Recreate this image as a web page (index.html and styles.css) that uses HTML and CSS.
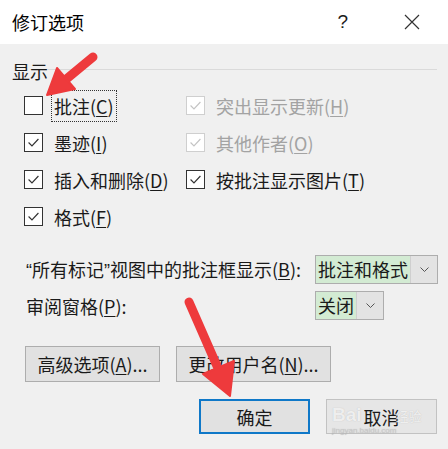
FILE: index.html
```html
<!DOCTYPE html>
<html lang="zh-CN">
<head>
    <meta charset="UTF-8">
    <title>修订选项</title>
    <link rel="stylesheet" href="styles.css">
</head>
<body>
    <div class="dialog">
        <header class="titlebar">
            <span class="title">修订选项</span>
            <span class="help">?</span>
            <svg class="close" width="16" height="16" viewBox="0 0 16 16">
                <path d="M1 1 L15 15 M15 1 L1 15" stroke="#333" stroke-width="1.2" fill="none" />
            </svg>
        </header>

        <main class="group">
            <div class="legend">
                <span>显示</span>
                <div class="rule"></div>
            </div>

            <ul class="checks">
                <li class="check">
                    <span class="box"></span>
                    <span class="label focus">批注(<u>C</u>)</span>
                </li>
                <li class="check disabled">
                    <span class="box"><svg viewBox="0 0 19 19"><path d="M4 9.5 L7.8 13.3 L15 5.6" /></svg></span>
                    <span class="label">突出显示更新(<u>H</u>)</span>
                </li>
                <li class="check">
                    <span class="box"><svg viewBox="0 0 19 19"><path d="M4 9.5 L7.8 13.3 L15 5.6" /></svg></span>
                    <span class="label">墨迹(<u>I</u>)</span>
                </li>
                <li class="check disabled">
                    <span class="box"><svg viewBox="0 0 19 19"><path d="M4 9.5 L7.8 13.3 L15 5.6" /></svg></span>
                    <span class="label">其他作者(<u>O</u>)</span>
                </li>
                <li class="check">
                    <span class="box"><svg viewBox="0 0 19 19"><path d="M4 9.5 L7.8 13.3 L15 5.6" /></svg></span>
                    <span class="label">插入和删除(<u>D</u>)</span>
                </li>
                <li class="check">
                    <span class="box"><svg viewBox="0 0 19 19"><path d="M4 9.5 L7.8 13.3 L15 5.6" /></svg></span>
                    <span class="label">按批注显示图片(<u>T</u>)</span>
                </li>
                <li class="check">
                    <span class="box"><svg viewBox="0 0 19 19"><path d="M4 9.5 L7.8 13.3 L15 5.6" /></svg></span>
                    <span class="label">格式(<u>F</u>)</span>
                </li>
            </ul>

            <div class="combos">
                <span class="caption"><span class="quote">“</span>所有标记<span class="quote">”</span>视图中的批注框显示(<u>B</u>):</span>
                <div class="combo">
                    <span class="value">批注和格式</span>
                    <span class="arrow"><svg width="9" height="5" viewBox="0 0 9 5"><path d="M0.5 0.5 L4.5 4.5 L8.5 0.5" /></svg></span>
                </div>
                <span class="caption">审阅窗格(<u>P</u>):</span>
                <div class="combo">
                    <span class="value">关闭</span>
                    <span class="arrow"><svg width="9" height="5" viewBox="0 0 9 5"><path d="M0.5 0.5 L4.5 4.5 L8.5 0.5" /></svg></span>
                </div>
            </div>

            <div class="actions">
                <button class="btn wide-a">高级选项(<u>A</u>)...</button>
                <button class="btn wide-b">更改用户名(<u>N</u>)...</button>
            </div>

            <div class="footer">
                <button class="btn ok">确定</button>
                <button class="btn cancel">取消</button>
            </div>
        </main>

        <div class="watermark">
            <span class="wm-big">Bai</span><span class="wm-cn">经验</span>
            <span class="wm-url">jingyan.baidu.com</span>
        </div>

        <svg class="arrows" width="448" height="449" viewBox="0 0 448 449">
            <g fill="#ee3a3c" stroke="#ee3a3c" stroke-linejoin="round">
                <line x1="93" y1="57" x2="64" y2="81" stroke-width="9" stroke-linecap="round" />
                <polygon points="47,95 57,68 75,89" stroke-width="2" />
                <line x1="189" y1="302" x2="217" y2="366" stroke-width="9" stroke-linecap="round" />
                <polygon points="230,396 203,374 234,361" stroke-width="2" />
            </g>
        </svg>
    </div>
</body>
</html>
```

FILE: styles.css
```css
body {
    margin: 0;
    font-family: "Noto Sans CJK SC", "Noto Sans", sans-serif;
    color: #1a1a1a;
    background: #f0f0f0;
}

.dialog {
    position: relative;
    width: 448px;
    height: 449px;
    overflow: hidden;
    background: #f0f0f0;
}

.titlebar {
    display: flex;
    align-items: center;
    height: 44px;
    padding-left: 12px;
    background: #fff;
    font-size: 18px;

    .title {
        flex-grow: 1;
        color: #000;
    }

    .help {
        margin-right: 56px;
        font-family: "Liberation Sans", sans-serif;
        font-size: 19px;
    }

    .close {
        margin-right: 28px;
    }
}

.group {
    padding: 0 11px 0 12px;
    font-size: 18px;
    line-height: 26px;
    white-space: nowrap;
}

u {
    text-decoration-thickness: 1px;
    text-underline-offset: 2px;
}

.legend {
    display: flex;
    align-items: center;
    margin-top: 14px;

    .rule {
        flex-grow: 1;
        height: 1px;
        margin-bottom: 3px;
        background: #dadada;
    }
}

.checks {
    display: grid;
    grid-template-columns: 162px auto;
    grid-auto-rows: 37px;
    margin: 3px 0 0;
    padding: 0 0 0 12px;
    list-style: none;
}

.check {
    display: flex;
    align-items: center;
    gap: 9px;

    .box {
        display: flex;
        width: 17px;
        height: 17px;
        border: 1px solid #333;
        background: #fff;

        svg {
            width: 17px;
            height: 17px;
            fill: none;
            stroke: #333;
            stroke-width: 1.3;
        }
    }

    .label {
        padding: 1px 2px;
    }

    .focus {
        outline: 1px dotted #333;
        padding: 2px 2px;
    }

    &.disabled {
        color: #a3a3a3;

        .box {
            border-color: #cfcfcf;

            svg {
                stroke: #c4c4c4;
            }
        }
    }
}

.combos {
    display: grid;
    grid-template-columns: 289px auto;
    row-gap: 7px;
    align-items: center;
    margin-top: 20px;
    padding-left: 14px;

    .quote {
        font-family: "Liberation Sans", sans-serif;
    }
}

.combo {
    display: flex;
    justify-self: start;
    height: 27px;
    border: 1px solid #adadad;

    .value {
        padding: 0 2px;
        background: #d3ebd3;
        line-height: 26px;
    }

    .arrow {
        display: flex;
        align-items: center;
        justify-content: center;
        width: 26px;
        background: #e3e3e3;
        border-left: 1px solid #cfcfcf;

        svg {
            fill: none;
            stroke: #555;
            stroke-width: 1;
        }
    }
}

.btn {
    height: 36px;
    padding: 0;
    font: inherit;
    color: #1a1a1a;
    background: #e1e1e1;
    border: 1px solid #adadad;
}

.actions {
    display: flex;
    gap: 16px;
    margin-top: 26px;
    padding-left: 13px;

    .wide-a {
        width: 135px;
    }

    .wide-b {
        width: 155px;
    }
}

.footer {
    display: flex;
    justify-content: flex-end;
    gap: 16px;
    margin-top: 17px;

    .btn {
        width: 111px;
        height: 35px;
    }

    .ok {
        border: 2px solid #0f78c8;
    }

    .cancel {
        background: #e6e6e6;
        border-color: #c2c2c2;
    }
}

.watermark {
    position: absolute;
    left: 332px;
    top: 402px;
    width: 100px;
    color: rgba(255, 255, 255, 0.75);
    text-shadow: 0 0 1px rgba(120, 120, 120, 0.4);
    white-space: nowrap;

    .wm-big {
        font-family: "Liberation Sans", sans-serif;
        font-weight: bold;
        font-size: 19px;
        line-height: 22px;
    }

    .wm-cn {
        margin-left: 34px;
        font-size: 13px;
        line-height: 22px;
    }

    .wm-url {
        display: block;
        font-family: "Liberation Sans", sans-serif;
        font-size: 8px;
        line-height: 8px;
        color: rgba(200, 200, 200, 0.6);
    }
}

.arrows {
    position: absolute;
    left: 0;
    top: 0;
    pointer-events: none;
}
```
